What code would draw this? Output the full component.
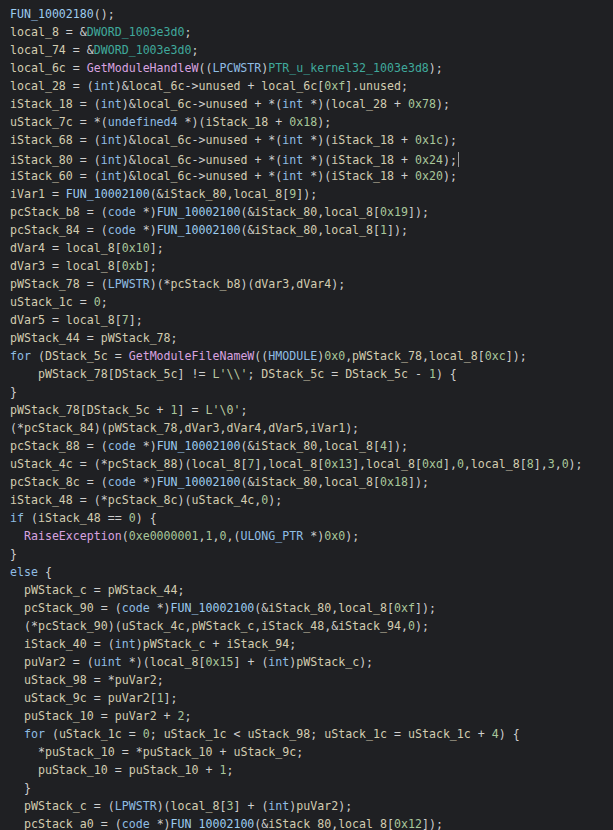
import React from "react";

const source = String.raw`FUN_10002180();
local_8 = &DWORD_1003e3d0;
local_74 = &DWORD_1003e3d0;
local_6c = GetModuleHandleW((LPCWSTR)PTR_u_kernel32_1003e3d8);
local_28 = (int)&local_6c->unused + local_6c[0xf].unused;
iStack_18 = (int)&local_6c->unused + *(int *)(local_28 + 0x78);
uStack_7c = *(undefined4 *)(iStack_18 + 0x18);
iStack_68 = (int)&local_6c->unused + *(int *)(iStack_18 + 0x1c);
iStack_80 = (int)&local_6c->unused + *(int *)(iStack_18 + 0x24);
iStack_60 = (int)&local_6c->unused + *(int *)(iStack_18 + 0x20);
iVar1 = FUN_10002100(&iStack_80,local_8[9]);
pcStack_b8 = (code *)FUN_10002100(&iStack_80,local_8[0x19]);
pcStack_84 = (code *)FUN_10002100(&iStack_80,local_8[1]);
dVar4 = local_8[0x10];
dVar3 = local_8[0xb];
pWStack_78 = (LPWSTR)(*pcStack_b8)(dVar3,dVar4);
uStack_1c = 0;
dVar5 = local_8[7];
pWStack_44 = pWStack_78;
for (DStack_5c = GetModuleFileNameW((HMODULE)0x0,pWStack_78,local_8[0xc]);
    pWStack_78[DStack_5c] != L'\\'; DStack_5c = DStack_5c - 1) {
}
pWStack_78[DStack_5c + 1] = L'\0';
(*pcStack_84)(pWStack_78,dVar3,dVar4,dVar5,iVar1);
pcStack_88 = (code *)FUN_10002100(&iStack_80,local_8[4]);
uStack_4c = (*pcStack_88)(local_8[7],local_8[0x13],local_8[0xd],0,local_8[8],3,0);
pcStack_8c = (code *)FUN_10002100(&iStack_80,local_8[0x18]);
iStack_48 = (*pcStack_8c)(uStack_4c,0);
if (iStack_48 == 0) {
  RaiseException(0xe0000001,1,0,(ULONG_PTR *)0x0);
}
else {
  pWStack_c = pWStack_44;
  pcStack_90 = (code *)FUN_10002100(&iStack_80,local_8[0xf]);
  (*pcStack_90)(uStack_4c,pWStack_c,iStack_48,&iStack_94,0);
  iStack_40 = (int)pWStack_c + iStack_94;
  puVar2 = (uint *)(local_8[0x15] + (int)pWStack_c);
  uStack_98 = *puVar2;
  uStack_9c = puVar2[1];
  puStack_10 = puVar2 + 2;
  for (uStack_1c = 0; uStack_1c < uStack_98; uStack_1c = uStack_1c + 4) {
    *puStack_10 = *puStack_10 + uStack_9c;
    puStack_10 = puStack_10 + 1;
  }
  pWStack_c = (LPWSTR)(local_8[3] + (int)puVar2);
  pcStack_a0 = (code *)FUN_10002100(&iStack_80,local_8[0x12]);`;

const keywords = new Set(["for", "if", "else"]);
const types = new Set(["code", "LPCWSTR", "LPWSTR", "HMODULE", "ULONG_PTR", "uint", "int", "undefined4"]);
const externs = new Set(["GetModuleHandleW", "GetModuleFileNameW", "RaiseException"]);

const colors = {
  keyword: "text-[#8fbde3]",
  type: "text-[#8fbde3]",
  extern: "text-[#d9a3e0]",
  func: "text-[#9ccbef]",
  data: "text-[#3fa99c]",
  number: "text-[#a9c79b]",
  string: "text-[#b9c9a0]",
  ident: "text-[#d3cdb0]",
  punct: "text-[#cfcfcf]",
};

const tokenRe = /[A-Za-z_]\w*'?|0x[0-9a-fA-F]+|\d+|'(?:\\.|[^'])*'|\s+|./g;

function classify(tok: string): keyof typeof colors | null {
  if (/^\s+$/.test(tok)) return null;
  if (tok.startsWith("'")) return "string";
  if (/^(0x[0-9a-fA-F]+|\d+)$/.test(tok)) return "number";
  if (/^[A-Za-z_]/.test(tok)) {
    if (keywords.has(tok)) return "keyword";
    if (types.has(tok)) return "type";
    if (externs.has(tok)) return "extern";
    if (tok.startsWith("FUN_")) return "func";
    if (tok.startsWith("DWORD_") || tok.startsWith("PTR_")) return "data";
    return "ident";
  }
  return "punct";
}

const CodeLine = ({ text, cursor }: { text: string; cursor?: boolean }) => {
  // L'x' literals: split the L prefix from the quote so it is coloured as a string
  const parts = text.replace(/L'/g, "\u0000'").match(tokenRe) ?? [];
  return (
    <div className="h-[18px] whitespace-pre">
      {parts.map((raw, i) => {
        let tok = raw;
        let kind = classify(tok);
        if (tok.startsWith("'") && i > 0 && parts[i - 1] === "\u0000") kind = "string";
        if (tok === "\u0000") return <span key={i} className={colors.string}>L</span>;
        return (
          <span key={i} className={kind ? colors[kind] : undefined}>
            {tok}
          </span>
        );
      })}
      {cursor && <span className="ml-[1px] inline-block h-[15px] w-px translate-y-[3px] bg-[#9a9a9a]" />}
    </div>
  );
};

export default function App() {
  const lines = source.split("\n");
  return (
    <div className="h-[830px] overflow-hidden bg-[#1f2023] pl-[10px] pt-[5px] font-['DejaVu_Sans_Mono',monospace] text-[11.6px] leading-[18px]">
      {lines.map((line, i) => (
        <CodeLine key={i} text={line} cursor={i === 8} />
      ))}
    </div>
  );
}
